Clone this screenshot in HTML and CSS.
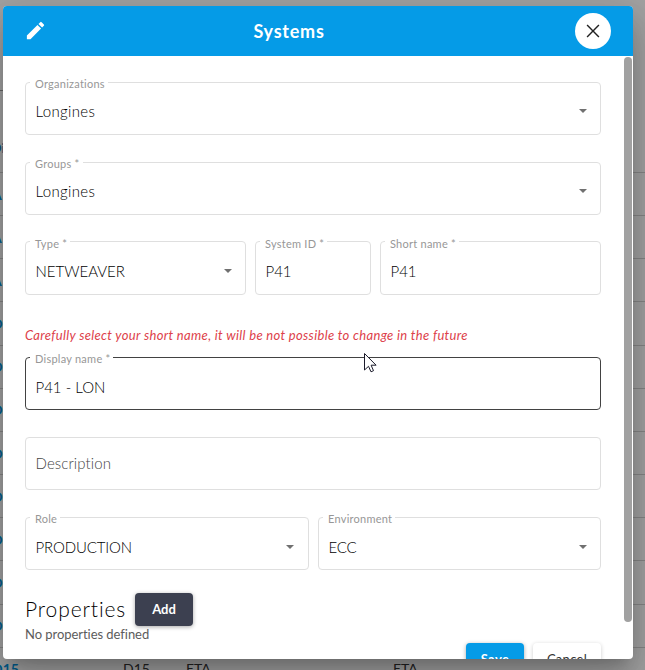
FILE: index.html
```html
<!DOCTYPE html>
<html lang="en">
<head>
<meta charset="utf-8">
<title>Systems</title>
<link rel="stylesheet" href="styles.css">
</head>
<body>
<div class="page">
  <div class="toolbar-line"></div>
  <div class="row head"><span class="c1">Di</span></div>
  <div class="row"><span class="c1">A</span></div>
  <div class="row"><span class="c1">A</span></div>
  <div class="row"><span class="c1">A</span></div>
  <div class="row"><span class="c1">D</span></div>
  <div class="row"><span class="c1">D</span></div>
  <div class="row"><span class="c1">D</span></div>
  <div class="row"><span class="c1">D</span></div>
  <div class="row"><span class="c1">D</span></div>
  <div class="row"><span class="c1">D</span></div>
  <div class="row"><span class="c1">D</span></div>
  <div class="row"><span class="c1">D</span></div>
  <div class="row"><span class="c1">D15</span><span class="c2">D15</span><span class="c3">ETA</span><span>ETA</span></div>
</div>
<div class="dialog">
  <header class="header">
    <svg class="pencil" viewBox="0 0 24 24"><path d="M3 17.25V21h3.75L17.81 9.94l-3.75-3.75L3 17.25zM20.71 7.04a1 1 0 0 0 0-1.41l-2.34-2.34a1 1 0 0 0-1.41 0l-1.83 1.83 3.75 3.75 1.83-1.83z"/></svg>
    <h1 class="title">Systems</h1>
    <button class="close" aria-label="Close"><svg viewBox="0 0 24 24"><path d="M19 6.1L17.9 5 12 10.9 6.1 5 5 6.1 10.9 12 5 17.9 6.1 19 12 13.1 17.9 19 19 17.9 13.1 12z"/></svg></button>
  </header>
  <div class="content">
    <form class="form">
      <div class="field"><label>Organizations</label><span class="value">Longines</span><i class="arrow"></i></div>
      <div class="field"><label>Groups *</label><span class="value">Longines</span><i class="arrow"></i></div>
      <div class="cols ids">
        <div class="field"><label>Type *</label><span class="value caps">NETWEAVER</span><i class="arrow"></i></div>
        <div class="field"><label>System ID *</label><span class="value caps">P41</span></div>
        <div class="field"><label>Short name *</label><span class="value caps">P41</span></div>
      </div>
      <p class="hint">Carefully select your short name, it will be not possible to change in the future</p>
      <div class="field active"><label>Display name *</label><span class="value caps">P41 - LON</span></div>
      <div class="field"><span class="value placeholder">Description</span></div>
      <div class="cols pair">
        <div class="field"><label>Role</label><span class="value caps">PRODUCTION</span><i class="arrow"></i></div>
        <div class="field"><label>Environment</label><span class="value caps">ECC</span><i class="arrow"></i></div>
      </div>
      <div class="properties"><h2>Properties</h2><button type="button" class="btn dark">Add</button></div>
      <p class="empty">No properties defined</p>
      <div class="actions"><button type="button" class="btn blue">Save</button><button type="button" class="btn plain">Cancel</button></div>
    </form>
    <div class="scroll"><div class="thumb"></div></div>
  </div>
</div>
<svg class="cursor" viewBox="0 0 13 20"><path d="M.5.5V17L4.5 13.3 7 18.8 9.5 17.7 7.1 12.2H12.1Z" fill="#fff" stroke="#1b1b2b"/></svg>
</body>
</html>
```
FILE: styles.css
```css
* { box-sizing: border-box; }
body { margin: 0; width: 645px; height: 670px; overflow: hidden; position: relative; background: #a3a3a3; font-family: Lato, "Open Sans", sans-serif; font-variant-ligatures: none; color: #333; }
h1, h2, p { margin: 0; font-weight: 400; }
button { border: 0; padding: 0; font-family: inherit; }

.page { height: 670px; overflow: hidden; }
.toolbar-line { width: 20px; height: 91px; border-bottom: 1px solid #666; }
.row { height: 43.17px; border-bottom: 1px solid #868686; display: flex; align-items: center; font-size: 14px; color: #222; white-space: nowrap; }
.row.head { height: 82px; padding-top: 31px; }
.row.head .c1 { color: #174f74; margin-left: -9px; }
.c1 { width: 131px; margin-left: -8px; color: #025e8f; font-weight: 700; }
.c2 { width: 63px; }
.c3 { width: 207px; }

.dialog { position: absolute; left: 3px; top: 6px; width: 630px; height: 653px; background: #fff; border-radius: 4px; overflow: hidden; display: flex; flex-direction: column; box-shadow: 0 11px 15px -7px rgba(0,0,0,.2), 0 24px 38px 3px rgba(0,0,0,.14), 0 9px 46px 8px rgba(0,0,0,.12); }
.header { flex: none; height: 50px; background: #059be7; display: flex; align-items: center; padding: 0 22px 0 21px; }
.pencil { width: 23px; height: 23px; fill: #fff; margin-bottom: 2px; }
.title { flex: 1; text-align: center; color: #fff; font-size: 18px; font-weight: 700; line-height: 24px; padding-right: 44px; letter-spacing: .75px; }
.close { width: 36px; height: 36px; border-radius: 50%; background: #fff; display: flex; align-items: center; justify-content: center; }
.close svg { width: 22px; height: 22px; fill: #222; }

.content { flex: 1; min-height: 0; display: flex; justify-content: space-between; }
.form { width: 598px; padding: 26px 0 0 22px; }
.scroll { width: 9px; padding-top: 1px; }
.thumb { width: 8px; height: 565px; border-radius: 4px; background: #a1a1a1; }

.field { position: relative; height: 53px; margin-bottom: 27px; border: 1px solid #dfdfdf; border-radius: 4px; display: flex; align-items: center; justify-content: space-between; padding: 5px 13px 0 9.5px; }
.field label { position: absolute; left: 4px; top: -6px; padding: 0 3px 0 5px; background: #fff; font-size: 11px; line-height: 14px; letter-spacing: .25px; color: #979797; white-space: nowrap; }
.value { font-size: 15px; line-height: 20px; font-weight: 300; letter-spacing: .35px; color: #000; white-space: nowrap; }
.caps { letter-spacing: 0; }
.pair .caps { letter-spacing: -.15px; }
.placeholder { color: #444; margin-top: -7px; letter-spacing: .1px; }
.active { border-color: #424242; }
.active, .pair .field { padding-top: 6px; }
.arrow { width: 0; height: 0; border: 4.5px solid transparent; border-top-color: #707070; border-bottom: 0; margin-top: -1px; }
.pair .arrow { margin-top: 0; }
.pair .field:first-child { padding-right: 14px; }
.cols { display: grid; column-gap: 9px; }
.ids { grid-template-columns: 221px 116px 221px; margin-top: -1px; }
.ids .field { height: 54px; padding-top: 6px; }
.ids label { top: -5px; }
.pair { grid-template-columns: 284px 283px; }
.hint { height: 18px; margin: 4px 0 13px; font-size: 13px; line-height: 18px; letter-spacing: .33px; font-style: italic; color: #dd414a; white-space: nowrap; }
.properties { display: flex; align-items: center; gap: 9px; height: 33px; margin-top: -4px; }
.properties h2 { width: 101px; font-size: 21px; line-height: 28px; font-weight: 300; letter-spacing: .9px; padding-bottom: 2px; white-space: nowrap; color: #000; }
.empty { font-size: 13px; line-height: 17px; color: #5c5c5c; letter-spacing: -.05px; }
.btn { height: 33px; border-radius: 4px; font-size: 13px; box-shadow: 0 1px 4px rgba(0,0,0,.35); }
.dark { width: 58px; background: #3c4050; color: #fff; font-weight: 700; padding-bottom: 1px; }
.actions { display: flex; justify-content: flex-end; gap: 9px; }
.blue { width: 58px; background: #059be7; color: #fff; font-weight: 700; letter-spacing: .4px; padding-bottom: 1px; }
.plain { width: 68px; background: #fff; color: #333; letter-spacing: .3px; padding-bottom: 1px; box-shadow: 0 1px 4px rgba(0,0,0,.2); }
.cursor { position: absolute; left: 364px; top: 353px; width: 13px; height: 20px; }
```
